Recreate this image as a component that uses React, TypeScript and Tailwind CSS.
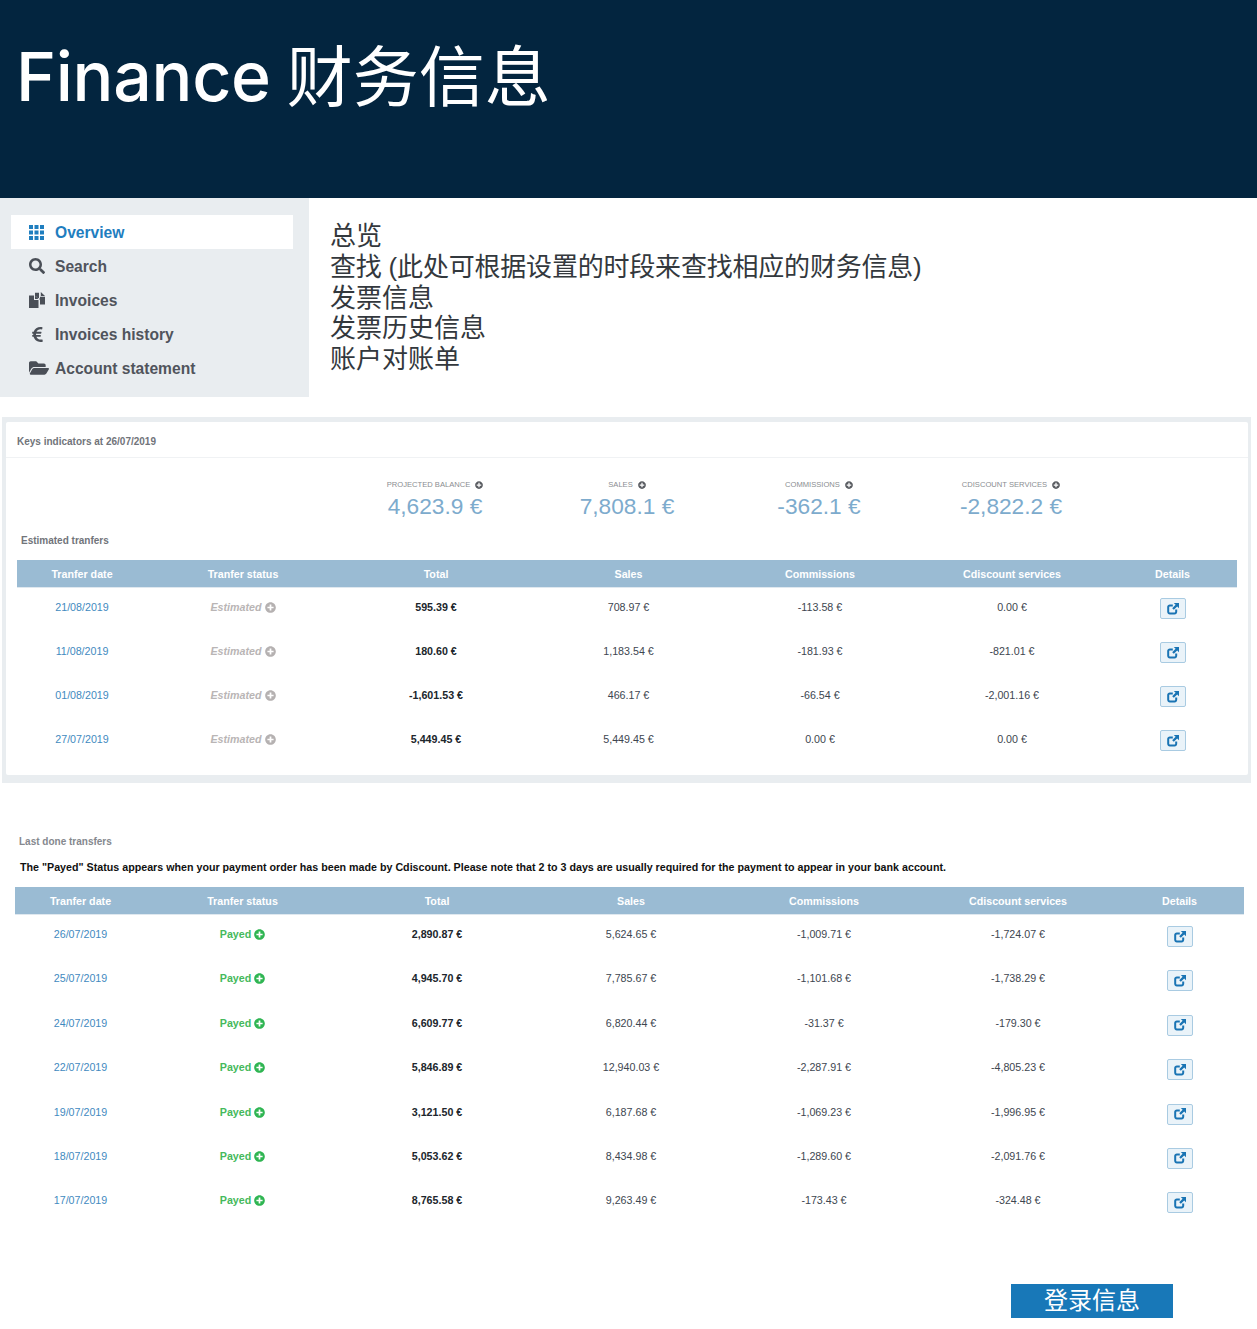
import React from "react";
import { FaSearch, FaEuroSign, FaFolderOpen, FaPlusCircle } from "react-icons/fa";

const sans = "font-['Liberation_Sans','Noto_Sans_CJK_SC',sans-serif]";

const t1Cols = "grid grid-cols-[130px_192px_194px_191px_192px_192px_129px]";
const t2Cols = "grid grid-cols-[131px_193px_196px_192px_194px_194px_129px]";

const headers = ["Tranfer date", "Tranfer status", "Total", "Sales", "Commissions", "Cdiscount services", "Details"];

const estimated = [
  ["21/08/2019", "595.39 €", "708.97 €", "-113.58 €", "0.00 €"],
  ["11/08/2019", "180.60 €", "1,183.54 €", "-181.93 €", "-821.01 €"],
  ["01/08/2019", "-1,601.53 €", "466.17 €", "-66.54 €", "-2,001.16 €"],
  ["27/07/2019", "5,449.45 €", "5,449.45 €", "0.00 €", "0.00 €"],
];

const payed = [
  ["26/07/2019", "2,890.87 €", "5,624.65 €", "-1,009.71 €", "-1,724.07 €"],
  ["25/07/2019", "4,945.70 €", "7,785.67 €", "-1,101.68 €", "-1,738.29 €"],
  ["24/07/2019", "6,609.77 €", "6,820.44 €", "-31.37 €", "-179.30 €"],
  ["22/07/2019", "5,846.89 €", "12,940.03 €", "-2,287.91 €", "-4,805.23 €"],
  ["19/07/2019", "3,121.50 €", "6,187.68 €", "-1,069.23 €", "-1,996.95 €"],
  ["18/07/2019", "5,053.62 €", "8,434.98 €", "-1,289.60 €", "-2,091.76 €"],
  ["17/07/2019", "8,765.58 €", "9,263.49 €", "-173.43 €", "-324.48 €"],
];

const kpis = [
  ["PROJECTED BALANCE", "4,623.9 €"],
  ["SALES", "7,808.1 €"],
  ["COMMISSIONS", "-362.1 €"],
  ["CDISCOUNT SERVICES", "-2,822.2 €"],
];

function GridIcon() {
  return (
    <svg viewBox="0 0 15 15" className="w-[15px] h-[15px]" fill="currentColor">
      {[0, 5.5, 11].flatMap((y) =>
        [0, 5.5, 11].map((x) => <rect key={`${x}-${y}`} x={x} y={y} width="4" height="4" />)
      )}
    </svg>
  );
}

function InvoicesIcon() {
  return (
    <svg viewBox="0 0 16 16" className="w-4 h-4" fill="#4a4f57">
      <path d="M0 3.5h5v4.5h4.5V16H0z" />
      <path d="M6 3.5 9.5 7H6z" />
      <path d="M6 .8h4V6H8.6L6 3.2z" />
      <path d="M11 0v4.8h5V12.5h-5V7.5h-.8V6.4H11zM11.8 0 16 4H11.8z" />
    </svg>
  );
}

function DetailButton() {
  return (
    <div className="w-[26px] h-[21px] rounded-[2px] border border-[#a9cbe2] bg-[#eaf3f9] flex items-center justify-center">
      <svg viewBox="0 0 12 12" className="w-[12px] h-[12px]" fill="none">
        <path d="M5.8 2.4H2.8a1.6 1.6 0 0 0-1.6 1.6v4.8A1.6 1.6 0 0 0 2.8 10.4h4.8a1.6 1.6 0 0 0 1.6-1.6V6.6" stroke="#1a74b4" strokeWidth="2" />
        <path d="M6.8 0H12V5.2L10.2 3.4 6.8 6.8 5.2 5.2 8.6 1.8z" fill="#1a74b4" />
      </svg>
    </div>
  );
}

function TableHeader({ cols }: { cols: string }) {
  return (
    <div className={`${cols} h-[28px] pt-[1px] items-center bg-[#9abbd3] border-b border-[#dfe8ef] text-[10.7px] font-bold text-white text-center`}>
      {headers.map((h) => (
        <div key={h}>{h}</div>
      ))}
    </div>
  );
}

function Row({ cols, row, kind, height }: { cols: string; row: string[]; kind: "est" | "pay"; height: string }) {
  return (
    <div className={`${cols} ${height} text-[10.7px] leading-[13px] text-center text-[#3d4650]`}>
      <div className="text-[#3f8ac0]">{row[0]}</div>
      {kind === "est" ? (
        <div className="flex items-center justify-center gap-[3px] h-[13px] font-bold italic text-[#b9b5b5]">
          Estimated <FaPlusCircle className="w-[11px] h-[11px] text-[#b5b1b1]" />
        </div>
      ) : (
        <div className="flex items-center justify-center gap-[3px] h-[13px] font-bold text-[#45b95c]">
          Payed <FaPlusCircle className="w-[11px] h-[11px] text-[#2fb552]" />
        </div>
      )}
      <div className="font-bold text-[#20262c]">{row[1]}</div>
      <div>{row[2]}</div>
      <div>{row[3]}</div>
      <div>{row[4]}</div>
      <div className="flex justify-center">
        <div className={kind === "est" ? "mt-[-3px]" : "mt-[-2px]"}>
          <DetailButton />
        </div>
      </div>
    </div>
  );
}

export default function App() {
  const nav = [
    { label: "Overview", icon: <GridIcon />, active: true },
    { label: "Search", icon: <FaSearch className="w-4 h-4" /> },
    { label: "Invoices", icon: <InvoicesIcon /> },
    { label: "Invoices history", icon: <FaEuroSign className="w-[17px] h-[17px]" /> },
    { label: "Account statement", icon: <FaFolderOpen className="w-[20px] h-[18px]" /> },
  ];

  return (
    <div className={`${sans} bg-white w-[1257px] h-[1329px] overflow-hidden`}>
      <header className="h-[198px] bg-[#03253f] pl-[16px] pt-[30px]">
        <h1 className="font-['Inter','Noto_Sans_CJK_SC',sans-serif] text-[68px] leading-[92px] font-medium text-white">
          <span className="tracking-[-0.3px]">Finance</span>
          <span className="ml-[16px] text-[66px] font-normal">财务信息</span>
        </h1>
      </header>

      <section className="flex h-[199px]">
        <nav className="w-[309px] bg-[#e9edf0] pt-[17px] pl-[11px]">
          {nav.map((n) => (
            <div
              key={n.label}
              className={`w-[282px] h-[34px] flex items-center pt-[2px] pl-[18px] text-[15.6px] font-bold ${
                n.active ? "bg-white text-[#1f7ebf]" : "text-[#50545c]"
              }`}
            >
              <span className={`w-[26px] mt-[-2px] flex shrink-0 ${n.active ? "text-[#1f7ebf]" : "text-[#4a4f57]"}`}>{n.icon}</span>
              {n.label}
            </div>
          ))}
        </nav>
        <div className="pl-[21px] pt-[23px] text-[26px] leading-[30.8px] text-[#33383d]">
          <div>总览</div>
          <div className="tracking-[-0.2px]">查找 (此处可根据设置的时段来查找相应的财务信息)</div>
          <div>发票信息</div>
          <div>发票历史信息</div>
          <div>账户对账单</div>
        </div>
      </section>

      <section className="mt-[20px] ml-[2px] w-[1249px] h-[366px] bg-[#e9edf0] pt-[5px] pl-[4px] pr-[3px] pb-[8px]">
        <div className="h-full bg-white rounded-[2px] flex flex-col overflow-hidden">
          <div className="h-[36px] shrink-0 border-b border-[#f0f2f4] pl-[11px] pt-[13px] text-[10px] leading-[13px] font-bold text-[#71747a]">
            Keys indicators at 26/07/2019
          </div>
          <div className="h-[60px] shrink-0 pt-[22px] pl-[333px] flex">
            {kpis.map(([label, value]) => (
              <div key={label} className="w-[192px] shrink-0 flex flex-col items-center">
                <div className="flex items-center gap-[5px] text-[7.6px] leading-[10px] text-[#8a8d91]">
                  {label}
                  <FaPlusCircle className="w-[8px] h-[8px] text-[#585b60]" />
                </div>
                <div className="mt-[2px] text-[22.7px] leading-[28px] text-[#7dabcd]">{value}</div>
              </div>
            ))}
          </div>
          <div className="pl-[15px] pt-[16px] h-[42px] shrink-0 text-[10px] leading-[13px] font-bold text-[#71747a]">Estimated tranfers</div>
          <div className="ml-[11px] w-[1220px] shrink-0">
            <TableHeader cols={t1Cols} />
            <div className="pt-[13px]">
              {estimated.map((r) => (
                <Row key={r[0]} cols={t1Cols} row={r} kind="est" height="h-[44px]" />
              ))}
            </div>
          </div>
        </div>
      </section>

      <section className="mt-[52px] pl-[15px] w-[1244px]">
        <div className="pl-[4px] h-[13px] text-[10px] leading-[13px] font-bold text-[#85888e]">Last done transfers</div>
        <div className="pl-[5px] mt-[13px] h-[13px] whitespace-nowrap text-[10.7px] leading-[13px] font-bold text-[#111]">
          The "Payed" Status appears when your payment order has been made by Cdiscount. Please note that 2 to 3 days are usually required for the payment to appear in your bank account.
        </div>
        <div className="mt-[13px] w-[1229px]">
          <TableHeader cols={t2Cols} />
          <div className="pt-[13px]">
            {payed.map((r) => (
              <Row key={r[0]} cols={t2Cols} row={r} kind="pay" height="h-[44.4px]" />
            ))}
          </div>
        </div>
      </section>

      <div className="flex justify-end pr-[84px] mt-[45px]">
        <div className="w-[162px] h-[34px] bg-[#1878b8] text-white text-[24px] leading-[34px] text-center">登录信息</div>
      </div>
    </div>
  );
}
